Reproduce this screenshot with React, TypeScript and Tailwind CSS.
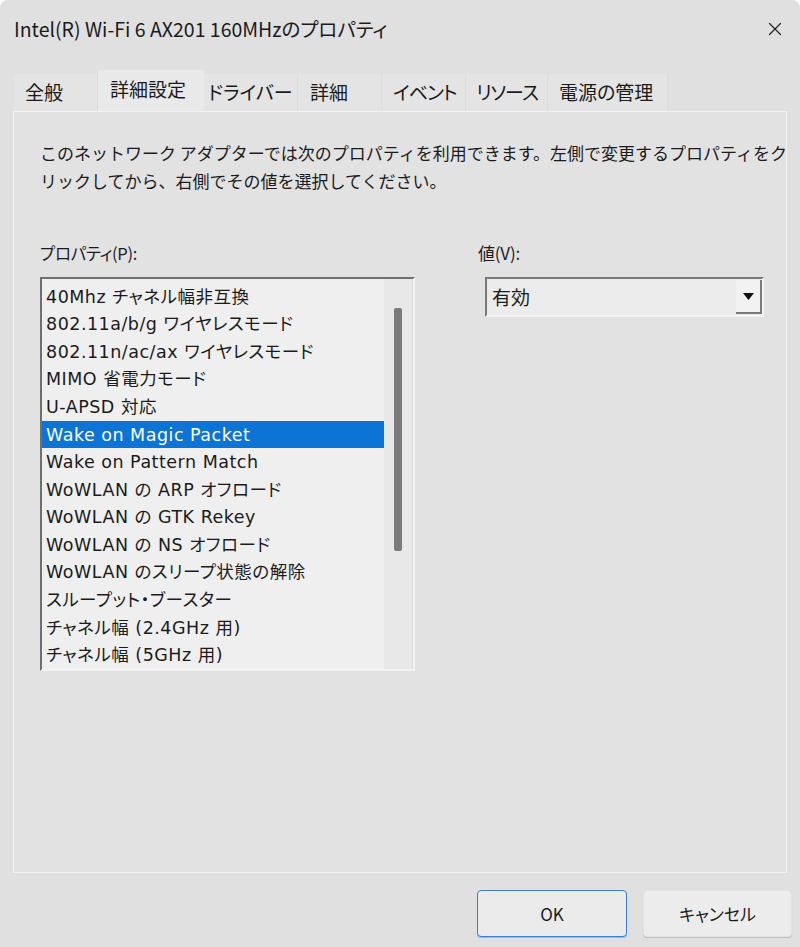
import { X } from "lucide-react";

const tabs = ["全般", "詳細設定", "ドライバー", "詳細", "イベント", "リソース", "電源の管理"];

// widths and text offsets read off the reference tab strip
const tabClasses: Record<string, string> = {
  全般: "w-[84px] pl-[11px]",
  詳細設定: "w-[106px] pl-[12px]",
  ドライバー: "w-[94px] pl-[4px]",
  詳細: "w-[84px] pl-[12px]",
  イベント: "w-[84px] pl-[11px] tracking-[-1px]",
  リソース: "w-[82px] pl-[10px] tracking-[-1px]",
  電源の管理: "w-[120px] pl-[11px]",
};

const properties = [
  "40Mhz チャネル幅非互換",
  "802.11a/b/g ワイヤレスモード",
  "802.11n/ac/ax ワイヤレスモード",
  "MIMO 省電力モード",
  "U-APSD 対応",
  "Wake on Magic Packet",
  "Wake on Pattern Match",
  "WoWLAN の ARP オフロード",
  "WoWLAN の GTK Rekey",
  "WoWLAN の NS オフロード",
  "WoWLAN のスリープ状態の解除",
  "スループット・ブースター",
  "チャネル幅 (2.4GHz 用)",
  "チャネル幅 (5GHz 用)",
];

const selectedProperty = "Wake on Magic Packet";

export default function App() {
  return (
    <div className="flex h-[947px] w-[800px] flex-col overflow-hidden rounded-t-[8px] bg-[#e0e0e0] font-['Noto_Sans_CJK_JP','Noto_Sans',sans-serif] text-[#1b1b1b]">
      <div className="flex h-[58px] items-center justify-between pl-[14px] pr-[14px]">
        <span className="text-[19.5px] [font-feature-settings:'palt']">
          Intel(R) Wi-Fi 6 AX201 160MHzのプロパティ
        </span>
        <X className="h-[22px] w-[22px] text-[#222]" strokeWidth={1.3} aria-hidden="true" />
      </div>

      <div className="mt-[12px] flex h-[41px] items-end px-[14px]">
        {tabs.map((tab) => {
          const selected = tab === "詳細設定";

          return (
            <div
              key={tab}
              className={
                selected
                  ? `${tabClasses[tab]} flex h-[41px] items-center bg-[#e9e9e9] pb-[2px] text-[19px] [font-feature-settings:'palt']`
                  : `${tabClasses[tab]} flex h-[37px] items-center border-r border-[#dcdcdc] bg-[#e4e4e4] text-[19px] [font-feature-settings:'palt']`
              }
            >
              {tab}
            </div>
          );
        })}
      </div>

      <section className="mx-[13px] flex h-[762px] flex-col border border-[#f3f3f3] bg-[#e2e2e2] pl-[26px] pt-[27px]">
        <p className="whitespace-nowrap text-[17px] leading-[28px]">
          このネットワーク アダプターでは次のプロパティを利用できます。左側で変更するプロパティをク
          <br />
          リックしてから、右側でその値を選択してください。
        </p>

        <div className="mt-[46px] flex gap-[63px]">
          <div className="flex flex-col">
            <div className="text-[16.5px] leading-[24px] tracking-[-0.3px] [font-feature-settings:'palt']">
              プロパティ(P):
            </div>
            <div className="mt-[12px] flex h-[394px] w-[375px] border-2 border-b-[#f4f4f4] border-l-[#6f6f6f] border-r-[#f4f4f4] border-t-[#6f6f6f] bg-[#efefef]">
              <ul className="flex flex-1 flex-col pt-[4px] font-['DejaVu_Sans','Noto_Sans_CJK_JP',sans-serif]">
                {properties.map((property) => {
                  const selected = property === selectedProperty;

                  return (
                    <li
                      key={property}
                      className={
                        selected
                          ? "flex h-[27.8px] items-center whitespace-nowrap bg-[#0b74d4] pl-[4px] text-[17.5px] tracking-[0.5px] text-white [font-feature-settings:'palt']"
                          : "flex h-[27.8px] items-center whitespace-nowrap pl-[4px] text-[17.5px] tracking-[0.5px] [font-feature-settings:'palt']"
                      }
                    >
                      {property}
                    </li>
                  );
                })}
              </ul>
              <div className="flex w-[29px] justify-center border-r border-[#dcdcdc] bg-[#e8e8e8] pt-[29px]">
                <div className="h-[243px] w-[8px] rounded-[2px] bg-[#7b7b7b]" />
              </div>
            </div>
          </div>

          <div className="flex flex-col">
            <div className="text-[17px] leading-[24px] tracking-[-0.2px] [font-feature-settings:'palt']">値(V):</div>
            <div className="ml-[7px] mt-[12px] flex h-[40px] w-[279px] items-center border-2 border-b-[#f4f4f4] border-l-[#7a7a7a] border-r-[#f4f4f4] border-t-[#7a7a7a] bg-[#ececec]">
              <span className="flex-1 pl-[5px] text-[19px]">有効</span>
              <div className="flex h-[34px] w-[26px] items-center justify-center border-b-2 border-r-2 border-b-[#7a7a7a] border-r-[#7a7a7a] bg-[#f2f2f2]">
                <svg width="11" height="7" viewBox="0 0 11 7" aria-hidden="true">
                  <path d="M0 0 H11 L5.5 7 Z" fill="#111" />
                </svg>
              </div>
            </div>
          </div>
        </div>
      </section>

      <div className="flex justify-end gap-[16px] pr-[8px] pt-[17px]">
        <button
          type="button"
          className="h-[47px] w-[150px] rounded-[4px] border border-[#3d7fcf] bg-[#ebebeb] text-[17px] shadow-[0_1px_0_#9bb9df]"
        >
          OK
        </button>
        <button
          type="button"
          className="h-[47px] w-[149px] rounded-[4px] border border-[#e3e3e3] bg-[#ececec] text-[17px] shadow-[0_1px_1px_#bdbdbd] [font-feature-settings:'palt']"
        >
          キャンセル
        </button>
      </div>
    </div>
  );
}
